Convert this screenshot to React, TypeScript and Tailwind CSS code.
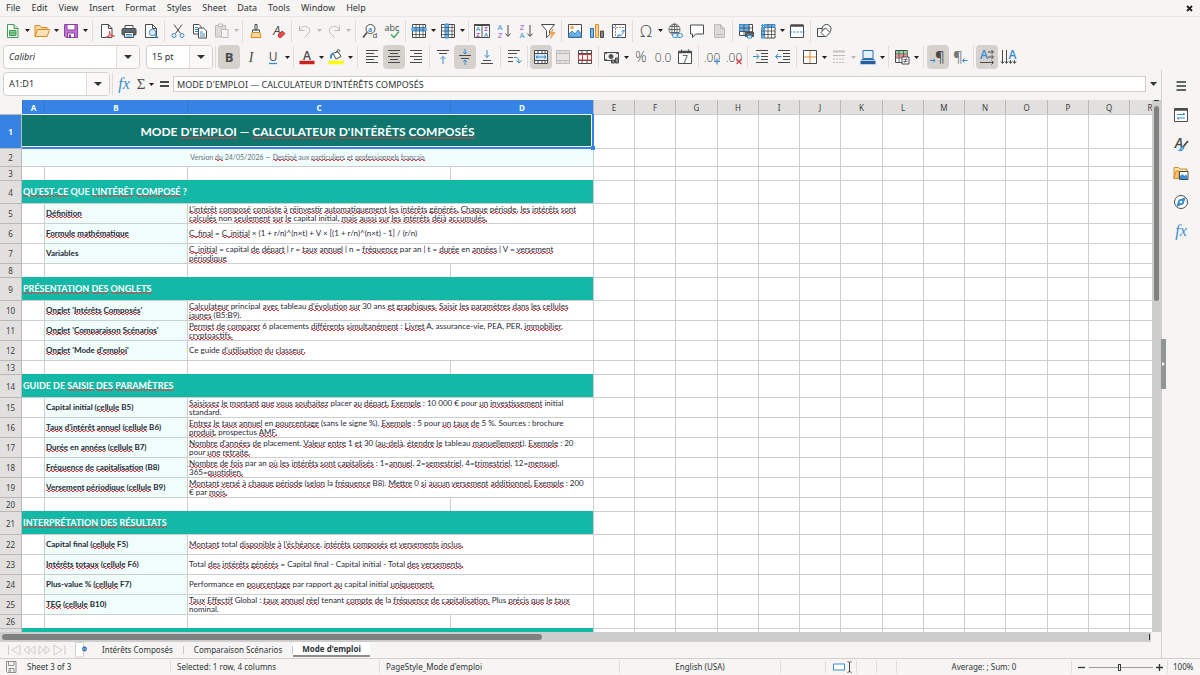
import type { ReactNode } from "react";
import { clsx } from "clsx";

const INK = "#4a4a4a";
const BLUE = "#3a8dcf";
const PALE = "#bdbbb9";

const menus = ["File", "Edit", "View", "Insert", "Format", "Styles", "Sheet", "Data", "Tools", "Window", "Help"];

type Row =
  | { kind: "title" | "note" | "section"; text: string }
  | { kind: "blank" }
  | { kind: "item"; label: string; lines: string[] };

// Words between braces are flagged by the spell checker
const rows: Row[] = [
  { kind: "title", text: "MODE {D'EMPLOI} — {CALCULATEUR} {D'INTÉRÊTS} {COMPOSÉS}" },
  { kind: "note", text: "Version {du} 24/05/2026 — {Destiné} aux {particuliers} {et} {professionnels} {français}" },
  { kind: "blank" },
  { kind: "section", text: "{QU'EST-CE} QUE {L'INTÉRÊT} {COMPOSÉ} ?" },
  {
    kind: "item",
    label: "{Définition}",
    lines: [
      "{L'intérêt} {composé} {consiste} {à} {réinvestir} {automatiquement} {les} {intérêts} {générés.} {Chaque} {période}, {les} {intérêts} {sont}",
      "{calculés} non {seulement} {sur} {le} capital initial, {mais} {aussi} {sur} {les} {intérêts} {déjà} {accumulés.}",
    ],
  },
  { kind: "item", label: "{Formule} {mathématique}", lines: ["{C_final} = {C_initial} × (1 + r/n)^(n×t) + V × [(1 + r/n)^(n×t) - 1] / (r/n)"] },
  {
    kind: "item",
    label: "Variables",
    lines: [
      "{C_initial} = capital {de} {départ} | r = {taux} {annuel} | n = {fréquence} par an | t = {durée} en {années} | V = {versement}",
      "{périodique}",
    ],
  },
  { kind: "blank" },
  { kind: "section", text: "{PRÉSENTATION} {DES} {ONGLETS}" },
  {
    kind: "item",
    label: "{Onglet} '{Intérêts} {Composés}'",
    lines: [
      "{Calculateur} principal {avec} tableau {d'évolution} {sur} 30 ans {et} {graphiques.} {Saisir} {les} {paramètres} {dans} {les} {cellules}",
      "{jaunes} (B5:B9).",
    ],
  },
  {
    kind: "item",
    label: "{Onglet} '{Comparaison} {Scénarios}'",
    lines: [
      "{Permet} {de} {comparer} 6 placements {différents} {simultanément} : {Livret} A, assurance-vie, PEA, PER, {immobilier},",
      "{cryptoactifs.}",
    ],
  },
  { kind: "item", label: "{Onglet} 'Mode {d'emploi}'", lines: ["Ce guide {d'utilisation} {du} {classeur.}"] },
  { kind: "blank" },
  { kind: "section", text: "GUIDE DE {SAISIE} {DES} {PARAMÈTRES}" },
  {
    kind: "item",
    label: "Capital initial ({cellule} B5)",
    lines: [
      "{Saisissez} {le} {montant} {que} {vous} {souhaitez} placer {au} {départ.} {Exemple} : 10 000 € pour {un} {investissement} initial",
      "standard.",
    ],
  },
  {
    kind: "item",
    label: "{Taux} {d'intérêt} {annuel} ({cellule} B6)",
    lines: [
      "{Entrez} {le} {taux} {annuel} en {pourcentage} (sans le signe %). {Exemple} : 5 pour {un} {taux} {de} 5 %. Sources : brochure",
      "{produit}, prospectus {AMF.}",
    ],
  },
  {
    kind: "item",
    label: "{Durée} en {années} ({cellule} B7)",
    lines: [
      "{Nombre} {d'années} {de} placement. {Valeur} {entre} 1 {et} 30 ({au-delà}, {étendre} {le} tableau {manuellement}). {Exemple} : 20",
      "pour {une} {retraite.}",
    ],
  },
  {
    kind: "item",
    label: "{Fréquence} {de} {capitalisation} (B8)",
    lines: [
      "{Nombre} {de} {fois} par an {où} {les} {intérêts} {sont} {capitalisés} : 1={annuel}, 2={semestriel}, 4={trimestriel}, 12={mensuel},",
      "365={quotidien.}",
    ],
  },
  {
    kind: "item",
    label: "{Versement} {périodique} ({cellule} B9)",
    lines: [
      "{Montant} {versé} {à} {chaque} {période} ({selon} la {fréquence} B8). {Mettre} 0 {si} {aucun} {versement} {additionnel.} {Exemple} : 200",
      "€ par {mois.}",
    ],
  },
  { kind: "blank" },
  { kind: "section", text: "{INTERPRÉTATION} {DES} {RÉSULTATS}" },
  { kind: "item", label: "Capital final ({cellule} F5)", lines: ["{Montant} total {disponible} {à} {l'échéance}, {intérêts} {composés} {et} {versements} {inclus.}"] },
  { kind: "item", label: "{Intérêts} {totaux} ({cellule} F6)", lines: ["Total {des} {intérêts} {générés} = Capital final - Capital initial - Total {des} {versements.}"] },
  { kind: "item", label: "Plus-value % ({cellule} F7)", lines: ["Performance en {pourcentage} par rapport {au} capital initial {uniquement.}"] },
  {
    kind: "item",
    label: "{TEG} ({cellule} B10)",
    lines: [
      "{Taux} {Effectif} Global : {taux} {annuel} {réel} tenant {compte} {de} la {fréquence} {de} {capitalisation.} Plus {précis} {que} {le} {taux}",
      "nominal.",
    ],
  },
  { kind: "blank" },
  { kind: "section", text: "" },
];

const rowHeights = {
  title: "h-[34px]",
  note: "h-[18px]",
  blank: "h-[14px]",
  section: "h-[23px]",
  item: "h-5",
};

const extraColumns = [
  ["E", 41], ["F", 41], ["G", 42], ["H", 41], ["I", 41], ["J", 41], ["K", 42],
  ["L", 41], ["M", 41], ["N", 41], ["O", 42], ["P", 41], ["Q", 41], ["R", 41],
] as const;

// Two offset dashed rows of pixels read as a small red wave under the word
const squiggle =
  "[background-image:linear-gradient(90deg,#e0393f_50%,transparent_50%),linear-gradient(90deg,transparent_50%,#e0393f_50%)] [background-position:0_calc(100%-1px),0_100%] [background-size:4px_1px] bg-repeat-x";

function Spelled({ text }: { text: string }) {
  return (
    <>
      {text.split(/(\{[^}]*\})/).map((part, i) =>
        part.startsWith("{") ? (
          <span key={i} className={squiggle}>
            {part.slice(1, -1)}
          </span>
        ) : (
          part
        ),
      )}
    </>
  );
}

/* ---------- Icons ---------- */

function Svg({ children, size = 16 }: { children: ReactNode; size?: number }) {
  return (
    <svg width={size} height={size} viewBox="0 0 16 16" fill="none" stroke={INK} strokeWidth="1" className="shrink-0 overflow-visible" aria-hidden="true">
      {children}
    </svg>
  );
}

function Glyph({ x, y, size, fill = INK, serif, weight = 400, italic, children }: { x: number; y: number; size: number; fill?: string; serif?: boolean; weight?: number; italic?: boolean; children: string }) {
  return (
    <text
      x={x}
      y={y}
      fontSize={size}
      fill={fill}
      stroke="none"
      textAnchor="middle"
      fontWeight={weight}
      fontStyle={italic ? "italic" : "normal"}
      fontFamily={serif ? "Liberation Serif, serif" : "Open Sans, sans-serif"}
    >
      {children}
    </text>
  );
}

const icons = {
  newDoc: (
    <Svg>
      <path d="M2.5 1.5h6.500l4 4v9h-10.500z" stroke="#3f9b52" fill="#fff" />
      <path d="M9 1.500v4h4" stroke="#3f9b52" fill="#cdebd2" />
      <path d="M4.500 7.500h6.500v5h-6.500zM4.500 10h6.500" stroke="#3f9b52" fill="#8bcf98" />
    </Svg>
  ),
  open: (
    <Svg>
      <path d="M1 13.500v-11h5l1.500 2h5.500v2.500" stroke="#d98b2b" fill="#f8d79a" />
      <path d="M1 13.500l2.500-7h12l-2.300 7z" stroke="#d98b2b" fill="#fbe2b0" />
    </Svg>
  ),
  save: (
    <Svg>
      <path d="M1.500 1.500h13v13h-11.500l-1.500-1.500z" stroke="#8e3fa8" fill="#c074d4" />
      <path d="M4 1.500h8v5.500h-8z" stroke="#8e3fa8" fill="#fff" />
      <path d="M4.500 10h7v4.500h-7z" stroke="#8e3fa8" fill="#fff" />
      <path d="M6 11.500h2v3h-2z" fill="#8e3fa8" stroke="none" />
    </Svg>
  ),
  pdf: (
    <Svg>
      <path d="M2.500 1.500h7l3.500 4v9h-10.500z" fill="#fff" />
      <path d="M9.500 1.500v4h3.500" />
      <path d="M7 14.500c3-1 4-4 3.500-6.500 0 3 2 5 5 5-3-.8-6-.3-8.500 1.500z" stroke="#e0434b" />
    </Svg>
  ),
  print: (
    <Svg>
      <path d="M4 2.500h8v3h-8z" fill="#fff" />
      <rect x="1" y="5.500" width="14" height="6.500" rx="1" fill="#5c6770" />
      <path d="M3.500 9.500h9v5h-9z" fill="#fff" />
      <path d="M5 11.500h6M5 13h6" stroke={BLUE} />
    </Svg>
  ),
  preview: (
    <Svg>
      <path d="M2.500 1.500h7l4 4v9h-11z" fill="#fff" />
      <path d="M9.500 1.500v4h4" />
      <circle cx="9.500" cy="9.500" r="3.200" stroke={BLUE} fill="#dceefb" />
      <path d="M12 12l3 3" stroke={BLUE} strokeWidth="1.500" />
    </Svg>
  ),
  cut: (
    <Svg>
      <path d="M4 1.500l6.500 9M12 1.500l-6.500 9" />
      <circle cx="4" cy="12.500" r="2" stroke={BLUE} />
      <circle cx="12" cy="12.500" r="2" stroke={BLUE} />
    </Svg>
  ),
  copy: (
    <Svg>
      <path d="M1.500 1.500h5.500l2 2v7.500h-7.500z" fill="#fff" />
      <path d="M3 4.500h3M3 6.500h3M3 8.500h3" stroke={BLUE} />
      <path d="M6.500 5h5l3 3v7h-8z" fill="#fff" />
      <path d="M8 9h3M8 11h5M8 13h5" stroke={BLUE} />
    </Svg>
  ),
  paste: (
    <Svg>
      <path d="M1.500 2.500h10v11.500h-10z" stroke={PALE} fill="#dcdbd9" />
      <path d="M4.500 1h4v2.500h-4z" stroke={PALE} fill="#f6f5f4" />
      <path d="M7.500 6.500h6.500v8h-6.500z" stroke={PALE} fill="#f6f5f4" />
    </Svg>
  ),
  clone: (
    <Svg>
      <path d="M7 1.500h2v5.500h-2z" />
      <path d="M4.500 7h7v2.500h-7z" />
      <path d="M4 9.500h8l1 5h-10z" stroke="#d98b2b" fill="#fad8a0" />
    </Svg>
  ),
  clear: (
    <Svg>
      <Glyph x={7} y={12} size={13} italic>A</Glyph>
      <path d="M8 12l4-4 3 2.500-4 4h-2z" fill="#e5484d" stroke="#c8343a" />
    </Svg>
  ),
  undo: (
    <Svg>
      <path d="M2.500 2.500v5h5M2.500 7.500c2-4 5-5 8-3.500 3 2 2.500 5 .5 7l-3.500 3.500" stroke={PALE} />
    </Svg>
  ),
  redo: (
    <Svg>
      <path d="M13.500 2.500v5h-5M13.500 7.500c-2-4-5-5-8-3.500-3 2-2.500 5-.5 7l3.500 3.500" stroke={PALE} />
    </Svg>
  ),
  find: (
    <Svg>
      <circle cx="8.500" cy="6" r="4.500" fill="#fff" />
      <path d="M5 9.500l-4 5" strokeWidth="1.600" />
      <Glyph x={8} y={8.500} size={7} fill={BLUE} weight={700}>a</Glyph>
      <Glyph x={13} y={15} size={8}>d</Glyph>
    </Svg>
  ),
  spell: (
    <Svg>
      <Glyph x={8} y={7.500} size={9}>abc</Glyph>
      <path d="M7 11.500l3 3 5-6" stroke="#3fa65a" strokeWidth="1.400" />
    </Svg>
  ),
  rowSel: (
    <Svg>
      <path d="M1.500 1.500h13v13h-13z" fill="#fff" />
      <path d="M1 4.500h14v3.500h-14z" fill="#6cb2e8" stroke={BLUE} />
      <path d="M5 1.500v13M8.500 1.500v13M12 1.500v13M1.500 11.500h13" strokeWidth=".8" />
    </Svg>
  ),
  colSel: (
    <Svg>
      <path d="M1.500 1.500h13v13h-13z" fill="#fff" />
      <path d="M5 1v14h3.500v-14z" fill="#6cb2e8" stroke={BLUE} />
      <path d="M12 1.500v13M1.500 4.500h13M1.500 8h13M1.500 11.500h13" strokeWidth=".8" />
    </Svg>
  ),
  sort: (
    <Svg>
      <path d="M.5 1.500h15v13h-15z" fill="#fff" />
      <path d="M.5 2h15" strokeWidth="2" />
      <path d="M8 2v12.500" />
      <Glyph x={4} y={8} size={6} fill={BLUE} weight={700}>A</Glyph>
      <Glyph x={4} y={14} size={6} fill="#a04fc0" weight={700}>Z</Glyph>
      <Glyph x={12} y={8} size={6} fill="#a04fc0" weight={700}>Z</Glyph>
      <Glyph x={12} y={14} size={6} fill={BLUE} weight={700}>A</Glyph>
    </Svg>
  ),
  asc: (
    <Svg>
      <Glyph x={4} y={7} size={8} fill={BLUE}>A</Glyph>
      <Glyph x={4} y={15} size={8} fill="#a04fc0">Z</Glyph>
      <path d="M12 2v11M9.500 10.500l2.500 3 2.500-3" />
    </Svg>
  ),
  desc: (
    <Svg>
      <Glyph x={4} y={7} size={8} fill="#a04fc0">Z</Glyph>
      <Glyph x={4} y={15} size={8} fill={BLUE}>A</Glyph>
      <path d="M12 2v11M9.500 10.500l2.500 3 2.500-3" />
    </Svg>
  ),
  filter: (
    <Svg>
      <path d="M1.500 1.500h13l-5 6v4.500l-3 2.500v-7z" fill="#fff" />
      <path d="M13 6l-4 5h3l-1.500 4.500 4.500-6h-3z" fill="#f6b35f" stroke="#e08a2a" strokeWidth=".6" />
    </Svg>
  ),
  image: (
    <Svg>
      <path d="M1.500 1.500h13v13h-13z" fill="#fff" />
      <path d="M2 14v-3l3-3 3 3 3-4 3 3.500v3.500z" fill="#6cb2e8" stroke={BLUE} />
      <circle cx="5" cy="4.500" r="1.500" fill="#f8b860" stroke="#e08a2a" strokeWidth=".6" />
    </Svg>
  ),
  chart: (
    <Svg>
      <path d="M1.500 5.500h3v9h-3z" fill="#7abcf0" stroke="#2a6fb0" />
      <path d="M6.500 1.500h3v13h-3z" fill="#fbd28e" stroke="#e08a2a" />
      <path d="M11.500 8h3v6.500h-3z" fill="#888" />
    </Svg>
  ),
  pivot: (
    <Svg>
      <path d="M1.500 1.500h13v13h-13z" fill="#fff" />
      <path d="M2 4.500h12.500M4.500 2v12.500" stroke="#8a8a8a" strokeDasharray="2 1" />
      <path d="M6.500 13c4 0 6-2 6-6M12.500 7l-2 2M12.500 7l2 2M6.500 13l2-2M6.500 13l2 2" stroke={BLUE} />
    </Svg>
  ),
  omega: <Svg><Glyph x={8} y={13.500} size={16} weight={300}>Ω</Glyph></Svg>,
  link: (
    <Svg>
      <g strokeWidth=".8">
        <circle cx="7.500" cy="6.500" r="5.500" fill="#fff" />
        <path d="M2 6.500h11M7.500 1v11M3 3.500h9M3 9.500h9" />
        <ellipse cx="7.500" cy="6.500" rx="2.700" ry="5.500" />
      </g>
      <rect x="5.500" y="10.500" width="5.500" height="4" rx="2" stroke={BLUE} fill="#f6f5f4" />
      <rect x="10" y="10.500" width="5.500" height="4" rx="2" stroke={BLUE} />
    </Svg>
  ),
  comment: <Svg><path d="M1.500 2h13v9h-8l-3 3.500v-3.500h-2z" fill="#fff" /></Svg>,
  header: (
    <Svg>
      <path d="M3.500 1.500h6l4 4v9h-10z" stroke={PALE} fill="#dcdbd9" />
      <path d="M9.500 1.500v4h4M5 11.500h7" stroke={PALE} />
    </Svg>
  ),
  printArea: (
    <Svg>
      <path d="M1.500 1.500h13v11h-13z" fill="#fff" />
      <path d="M1.500 1.500h9.500v7h-9.500z" fill="#6cb2e8" stroke={BLUE} />
      <path d="M6 1.500v11M11 1.500v11M1.500 5h13M1.500 8.500h13" strokeWidth=".8" />
      <path d="M7.500 9.500h8v4h-8z" fill="#5c6770" />
      <path d="M9.500 12.500h4v2.500h-4z" fill="#fff" stroke={BLUE} />
    </Svg>
  ),
  freeze: (
    <Svg>
      <path d="M4.500 4.500h10.500v10.500h-10.500z" fill="#fff" />
      <path d="M1.500 4.500h3v10.500h-3zM4.500 1.500h10.500v3h-10.500z" fill="#6cb2e8" stroke={BLUE} />
      <path d="M8 1.500v13.500M11.500 1.500v13.500M1.500 8h13.500M1.500 11.500h13.500" strokeWidth=".8" />
      <path d="M1 2.500h3M2.500 1v3" stroke={BLUE} />
    </Svg>
  ),
  split: (
    <Svg>
      <path d="M1.500 2.500h13v12h-13z" fill="#fff" />
      <path d="M1.500 2.500h13" strokeWidth="2.500" />
      <path d="M.5 9h15" stroke={BLUE} strokeDasharray="2.500 1" />
    </Svg>
  ),
  shapes: (
    <Svg>
      <path d="M1.500 5.500h8v8h-8z" />
      <circle cx="10.500" cy="6" r="4.500" fill="#f6f5f4" fillOpacity=".7" />
      <path d="M9.500 5l4.500 4.500-4.500 4.500-4.500-4.500z" fill="#fff" />
    </Svg>
  ),
  bold: <Svg><Glyph x={8} y={13} size={13} weight={700}>B</Glyph></Svg>,
  italic: <Svg><Glyph x={8} y={13} size={14} italic serif>I</Glyph></Svg>,
  underline: (
    <Svg>
      <Glyph x={8} y={11.500} size={12}>U</Glyph>
      <path d="M4 14.500h8" stroke={BLUE} strokeWidth="1.300" />
    </Svg>
  ),
  fontColor: (
    <Svg>
      <Glyph x={8} y={10.500} size={12} weight={600}>A</Glyph>
      <path d="M.5 13.500h15" stroke="#c9211e" strokeWidth="3.500" />
    </Svg>
  ),
  fillColor: (
    <Svg>
      <path d="M5 4.500l5-2 3 5-5 2.500z" fill="#fff" />
      <path d="M9 4v-2.500c1-1.500 3-1 3 1" />
      <path d="M3 9.500c-.5-3 .5-5 3-5" stroke={BLUE} strokeWidth="2" />
      <path d="M.5 13.500h15" stroke="#ffff00" strokeWidth="3.500" />
    </Svg>
  ),
  left: <Svg><path d="M2 1.500h12M2 4.500h8M2 7.500h12M2 10.500h8M2 13.500h12" /></Svg>,
  center: <Svg><path d="M2 1.500h12M4 4.500h8M2 7.500h12M4 10.500h8M2 13.500h12" /></Svg>,
  right: <Svg><path d="M2 1.500h12M6 4.500h8M2 7.500h12M6 10.500h8M2 13.500h12" /></Svg>,
  top: (
    <Svg>
      <path d="M2 1.500h12M4 4.500h8" />
      <path d="M8 15v-7.500M5.500 10l2.500-2.500 2.500 2.500" stroke={BLUE} />
    </Svg>
  ),
  middle: (
    <Svg>
      <path d="M2 6.500h12M4 9.500h8" />
      <path d="M8 0v4.500M6 3l2 2 2-2M8 16v-4.500M6 13l2-2 2 2" stroke={BLUE} />
    </Svg>
  ),
  bottom: (
    <Svg>
      <path d="M4 11.500h8M2 14.500h12" />
      <path d="M8 1v7.500M5.500 6l2.500 2.500 2.500-2.500" stroke={BLUE} />
    </Svg>
  ),
  wrap: (
    <Svg>
      <path d="M2 1.500h12M2 4.500h9M2 8.500h5M2 12.500h5" />
      <path d="M8 8.500c3-.5 5 .5 5 5M10.500 11.500l2.500 2.500 2.500-2.500" stroke={BLUE} />
    </Svg>
  ),
  merge: (
    <Svg>
      <path d="M1.500 1.500h13v13h-13z" fill="#fff" />
      <path d="M1.500 4.500h13M1.500 11.500h13M5 1.500v3M9 1.500v3M12 1.500v3M5 11.500v3M9 11.500v3M12 11.500v3" />
      <path d="M2 5h12v6h-12z" fill="#d4eafa" stroke="none" />
      <path d="M3 8h10M5 6.500l-2 1.500 2 1.500M11 6.500l2 1.500-2 1.500" stroke={BLUE} />
    </Svg>
  ),
  mergeOff: (
    <Svg>
      <path d="M1.500 1.500h13v13h-13z" stroke={PALE} fill="#e6e5e3" />
      <path d="M1.500 4.500h13M1.500 11.500h13M5 1.500v3M10 1.500v3M5 11.500v3M10 11.500v3" stroke={PALE} />
    </Svg>
  ),
  unmerge: (
    <Svg>
      <path d="M1.500 1.500h13v13h-13z" fill="#fff" />
      <path d="M1.500 4.500h13M1.500 11.500h13M5 1.500v3M10 1.500v3M5 11.500v3M10 11.500v3" />
      <path d="M1.500 5.500h13v5.500h-13zM5.500 5.500v5.500M10.500 5.500v5.500" stroke="#d9363e" />
    </Svg>
  ),
  currency: (
    <Svg>
      <path d="M.5 3.500h14v8h-14z" fill="#f0f0f0" />
      <circle cx="7" cy="7.500" r="2" fill="#555" />
      <path d="M7.500 14h3v-3h-3zM11.500 14h3v-5h-3z" fill="#888" />
      <path d="M1 4h2M12 4h2M1 11h2" strokeWidth="1.600" />
    </Svg>
  ),
  percent: <Svg><Glyph x={8} y={13} size={14} weight={300}>%</Glyph></Svg>,
  number: <Svg><Glyph x={8} y={12.500} size={12} weight={300}>0.0</Glyph></Svg>,
  date: (
    <Svg>
      <path d="M1.500 2.500h13v12h-13z" fill="#fff" />
      <path d="M1.500 3h13" strokeWidth="2.500" />
      <path d="M4.500 .5v2M11.500 .5v2" />
      <Glyph x={8} y={13.500} size={10}>7</Glyph>
    </Svg>
  ),
  decAdd: (
    <Svg>
      <Glyph x={8} y={12.500} size={12} weight={300}>.00</Glyph>
      <path d="M10 12.500h6M13 9.500v6" stroke={BLUE} strokeWidth="1.200" />
    </Svg>
  ),
  decDel: (
    <Svg>
      <Glyph x={8} y={12.500} size={12} weight={300}>.00</Glyph>
      <path d="M10.500 10l5 5M15.500 10l-5 5" stroke="#e0434b" strokeWidth="1.200" />
    </Svg>
  ),
  indent: (
    <Svg>
      <path d="M3 1.500h12M8 4.500h7M8 7.500h7M8 10.500h7M3 13.500h12" />
      <path d="M0 7.500h6M3.500 5l2.500 2.500-2.500 2.500" stroke={BLUE} />
    </Svg>
  ),
  outdent: (
    <Svg>
      <path d="M3 1.500h12M8 4.500h7M8 7.500h7M8 10.500h7M3 13.500h12" />
      <path d="M6.500 7.500h-6M3 5l-2.500 2.500 2.500 2.500" stroke={BLUE} />
    </Svg>
  ),
  borders: (
    <Svg>
      <path d="M1.500 1.500h13v13h-13z" fill="#fff" />
      <path d="M8 2v12M2 8h12" stroke="#d98b2b" />
    </Svg>
  ),
  borderStyle: (
    <Svg>
      <path d="M2 2h12M2 3h12" stroke={PALE} />
      <path d="M2 6.500h12" stroke={PALE} />
      <path d="M2 10h12M2 13.500h12" stroke={PALE} strokeDasharray="2 1" />
    </Svg>
  ),
  borderColor: (
    <Svg>
      <path d="M3 1.500h10v8h-10z" fill="#e4f1fb" stroke="#2a6fb0" />
      <path d="M1.500 10.500h13" stroke="#2a6fb0" />
      <path d="M.5 13.500h15" stroke="#245f9e" strokeWidth="3.500" />
    </Svg>
  ),
  conditional: (
    <Svg>
      <path d="M1.500 1.500h12v12h-12z" fill="#fff" />
      <path d="M2 2h11.500v3h-11.500z" fill="#8fd69d" stroke="none" />
      <path d="M2 5.500h11.500v3h-11.500z" fill="#f58a8e" stroke="none" />
      <path d="M1.500 5h12M1.500 9h12M5 1.500v12M9.500 1.500v12" strokeWidth=".8" />
      <path d="M8 8h7v7h-7z" fill="#fff" />
      <path d="M9.500 10.500h4M9.500 12.500h4M12.500 9.500l-2 4" strokeWidth=".8" />
    </Svg>
  ),
  ltr: (
    <Svg>
      <Glyph x={10} y={12.500} size={15}>¶</Glyph>
      <path d="M0 11.500h5M3 9.500l2 2-2 2" stroke={BLUE} />
    </Svg>
  ),
  rtl: (
    <Svg>
      <Glyph x={6} y={12.500} size={15} fill="#777">¶</Glyph>
      <path d="M15.500 11.500h-5M12.500 9.500l-2 2 2 2" stroke={BLUE} />
    </Svg>
  ),
  textLtr: (
    <Svg>
      <Glyph x={5} y={10} size={12} fill={BLUE} weight={600}>A</Glyph>
      <path d="M9 3h5M9 8h5M1 13.500h13M12.500 1l2 2-2 2M12.500 6l2 2-2 2M12.500 11.500l2 2-2 2" />
    </Svg>
  ),
  textTtb: (
    <Svg>
      <path d="M1.500 1v13M5.500 1v13M9.500 11v3M13.500 11v3M0 12.500l1.500 2 1.500-2M4 12.500l1.500 2 1.500-2M8 12.500l1.500 2 1.500-2M12 12.500l1.500 2 1.500-2" />
      <Glyph x={11.500} y={10} size={12} fill={BLUE} weight={600}>A</Glyph>
    </Svg>
  ),
  fx: <Svg><Glyph x={8} y={12.500} size={16} fill={BLUE} italic serif>fx</Glyph></Svg>,
  sum: <Svg><Glyph x={8} y={12.500} size={15} serif>Σ</Glyph></Svg>,
  equals: <Svg><path d="M4 6h9M4 10h9" strokeWidth="1.800" /></Svg>,
  hamburger: <Svg><path d="M3.500 4h9.500M3.500 8h9.500M3.500 12h9.500" stroke="#2e3436" strokeWidth="1.500" /></Svg>,
  properties: (
    <Svg>
      <path d="M1.500 1.500h13v13h-13z" fill="#fff" />
      <path d="M1.500 2.500h13" strokeWidth="2.500" />
      <path d="M4 7.500h8M10 6l2 1.500M4 11h8M6 12.500l-2-1.500" stroke={BLUE} />
    </Svg>
  ),
  styles: (
    <Svg>
      <Glyph x={6} y={11.500} size={14} weight={600} italic>A</Glyph>
      <path d="M15 5l-5 6" strokeWidth="1.800" />
      <path d="M5.500 14.500c3 .5 5-.5 5.500-3l-2-1c-1 1-1.500 3-3.500 4z" fill="#6cb2e8" stroke={BLUE} />
    </Svg>
  ),
  gallery: (
    <Svg>
      <path d="M1 13.500v-11h4.500l1.500 1.500h7v3" stroke="#d98b2b" fill="#fbe2b0" />
      <path d="M1 13.500l2-7.500h3v7.500z" stroke="#d98b2b" fill="#f7c477" />
      <path d="M6.500 6.500h8.500v8h-8.500z" fill="#fff" />
      <path d="M7 14v-3l2.500-2 2 2 1.500-1.500 1.500 2v2.500z" fill={BLUE} stroke="none" />
    </Svg>
  ),
  navigator: (
    <Svg>
      <circle cx="8" cy="8" r="6.500" fill="#fff" />
      <path d="M12 4l-2 6-6 2 2-6z" fill={BLUE} stroke={BLUE} />
      <circle cx="8" cy="8" r="1.200" fill="#fff" stroke="none" />
    </Svg>
  ),
};

type IconName = keyof typeof icons;

/* ---------- Toolbar pieces ---------- */

function Caret({ pale }: { pale?: boolean }) {
  return (
    <svg width="5" height="3" viewBox="0 0 5 3" className="shrink-0" aria-hidden="true">
      <path d="M0 0h5L2.500 3z" fill={pale ? PALE : "#1f1f1f"} />
    </svg>
  );
}

function ToolButton({ icon, label, active, menu, disabled }: { icon: IconName; label: string; active?: boolean; menu?: boolean; disabled?: boolean }) {
  return (
    <div className="flex shrink-0 items-center">
      <button
        type="button"
        aria-label={label}
        disabled={disabled}
        className={clsx("flex h-6 w-[22px] items-center justify-center rounded", active && "bg-[#d5d1cd]")}
      >
        {icons[icon]}
      </button>
      {menu && (
        <button type="button" aria-label={`${label} options`} className="flex h-6 w-[7px] items-center justify-center">
          <Caret pale={disabled} />
        </button>
      )}
    </div>
  );
}

function Sep({ wide }: { wide?: boolean }) {
  return (
    <div className={clsx("flex h-[22px] shrink-0 justify-center", wide ? "w-[7px]" : "w-[5px]")}>
      <div className="w-px bg-[#dfddda]" />
    </div>
  );
}

type Tool = [IconName, string, ("menu" | "active" | "disabled" | "disabledMenu")?] | "sep" | "wide";

const standardTools: Tool[] = [
  ["newDoc", "New", "menu"], ["open", "Open", "menu"], ["save", "Save", "menu"], "wide",
  ["pdf", "Export as PDF"], ["print", "Print"], ["preview", "Print Preview"], "sep",
  ["cut", "Cut"], ["copy", "Copy"], ["paste", "Paste", "disabledMenu"], "sep",
  ["clone", "Clone Formatting"], ["clear", "Clear Formatting"], "sep",
  ["undo", "Undo", "disabledMenu"], ["redo", "Redo", "disabledMenu"], "wide",
  ["find", "Find and Replace"], ["spell", "Spelling"], "sep",
  ["rowSel", "Row", "menu"], ["colSel", "Column", "menu"], "sep",
  ["sort", "Sort"], ["asc", "Sort Ascending"], ["desc", "Sort Descending"], ["filter", "AutoFilter"], "sep",
  ["image", "Insert Image"], ["chart", "Insert Chart"], ["pivot", "Insert Pivot Table"], "sep",
  ["omega", "Special Character", "menu"], ["link", "Insert Hyperlink"], ["comment", "Insert Comment"], ["header", "Headers and Footers", "disabled"], "sep",
  ["printArea", "Define Print Area"], ["freeze", "Freeze Panes", "menu"], ["split", "Split Window"], "sep",
  ["shapes", "Show Draw Functions"],
];

const formatTools: Tool[] = [
  ["bold", "Bold", "active"], ["italic", "Italic"], ["underline", "Underline", "menu"], "sep",
  ["fontColor", "Font Color", "menu"], ["fillColor", "Background Color", "menu"], "wide",
  ["left", "Align Left"], ["center", "Center Horizontally", "active"], ["right", "Align Right"], "sep",
  ["top", "Align Top"], ["middle", "Center Vertically", "active"], ["bottom", "Align Bottom"], "sep",
  ["wrap", "Wrap Text"], "sep",
  ["merge", "Merge and Center", "active"], ["mergeOff", "Merge Cells", "disabled"], ["unmerge", "Unmerge Cells"], "sep",
  ["currency", "Format as Currency", "menu"], ["percent", "Format as Percent"], ["number", "Format as Number"], ["date", "Format as Date"], "sep",
  ["decAdd", "Add Decimal Place"], ["decDel", "Delete Decimal Place"], "sep",
  ["indent", "Increase Indent"], ["outdent", "Decrease Indent"], "sep",
  ["borders", "Borders", "menu"], ["borderStyle", "Border Style", "disabledMenu"], ["borderColor", "Border Color", "menu"], "sep",
  ["conditional", "Conditional", "menu"], "wide",
  ["ltr", "Left-To-Right", "active"], ["rtl", "Right-To-Left"], "sep",
  ["textLtr", "Text direction from left to right", "active"], ["textTtb", "Text direction from top to bottom"],
];

function Tools({ tools }: { tools: Tool[] }) {
  return (
    <>
      {tools.map((tool, i) => {
        if (typeof tool === "string") return <Sep key={i} wide={tool === "wide"} />;
        const [icon, label, mode] = tool;
        return (
          <ToolButton
            key={i}
            icon={icon}
            label={label}
            active={mode === "active"}
            menu={mode === "menu" || mode === "disabledMenu"}
            disabled={mode === "disabled" || mode === "disabledMenu"}
          />
        );
      })}
    </>
  );
}

function Combo({ label, value, className, italic }: { label: string; value: string; className: string; italic?: boolean }) {
  return (
    <div className={clsx("flex h-6 shrink-0 overflow-hidden rounded border border-[#d3d0cc] bg-white", className)}>
      <input
        aria-label={label}
        defaultValue={value}
        className={clsx("w-0 min-w-0 flex-1 bg-transparent pl-[5px] text-[9px] outline-none", italic && "italic")}
      />
      <button type="button" aria-label={`${label} list`} className="flex w-[23px] items-center justify-center border-l border-[#dedbd8] bg-[#faf9f8]">
        <svg width="8" height="4" viewBox="0 0 8 4" aria-hidden="true">
          <path d="M0 0h8L4 4z" fill="#2e3436" />
        </svg>
      </button>
    </div>
  );
}

/* ---------- Sheet ---------- */

const line = "border-[#cccfd0]";

function SheetRow({ row, index }: { row: Row; index: number }) {
  const selected = index === 0;
  return (
    <tr className={rowHeights[row.kind]}>
      <th
        scope="row"
        className={clsx(
          "border-t border-r border-[#b9b8b6] text-center text-[8px] leading-[9px]",
          selected ? "bg-[#3584e4] font-bold text-white" : "bg-[#e1e0de] font-normal text-[#3c3c3c]",
        )}
      >
        {index + 1}
      </th>
      {row.kind === "title" && (
        <td colSpan={4} className="relative bg-[#0f766e] text-center font-[Lato,sans-serif] text-xs leading-[15px] font-bold text-white">
          <Spelled text={row.text} />
          <div className="absolute top-0 -right-px -bottom-px left-0 border-r-2 border-b-2 border-[#3584e4]">
            <div className="h-full border-t border-r border-b border-white" />
          </div>
          <div className="absolute -right-0.5 -bottom-0.5 size-1 bg-[#3584e4]" />
        </td>
      )}
      {row.kind === "note" && (
        <td colSpan={4} className="bg-[#f0fdfa] text-center font-[Lato,sans-serif] text-[7px] leading-[9px] text-[#6b7280]">
          <Spelled text={row.text} />
        </td>
      )}
      {row.kind === "section" && (
        <td colSpan={4} className="bg-[#14b8a6] pl-px font-[Lato,sans-serif] text-[9px] leading-[11px] font-bold text-white">
          <Spelled text={row.text} />
        </td>
      )}
      {row.kind === "blank" && (
        <>
          <td className={clsx("border-t", line)} />
          <td className={clsx("border-t border-l", line)} />
          <td className={clsx("border-t border-l", line)} />
          <td className={clsx("border-t border-l", line)} />
        </>
      )}
      {row.kind === "item" && (
        <>
          <td className={clsx("border-t", line)} />
          <td className={clsx("border-t border-l bg-[#f0fdfa] pl-px font-[Lato,sans-serif] text-[8px] leading-[9px] font-bold text-[#1f2937]", line)}>
            <Spelled text={row.label} />
          </td>
          <td colSpan={2} className={clsx("border-t border-l pl-px font-[Lato,sans-serif] text-[8px] leading-[9px] whitespace-nowrap text-[#1f2937]", line)}>
            {row.lines.map((text) => (
              <div key={text}>
                <Spelled text={text} />
              </div>
            ))}
          </td>
        </>
      )}
      {extraColumns.map(([name]) => (
        <td key={name} className={clsx("border-t border-l", line)} />
      ))}
    </tr>
  );
}

function Sheet() {
  const head = "border-l border-[#b9b8b6] bg-[#e1e0de] text-center text-[8px] leading-[9px] font-normal text-[#3c3c3c]";
  const headSelected = "border-l border-[#2f77cf] bg-[#3584e4] text-center text-[8px] leading-[9px] font-bold text-white";
  return (
    <table className="w-[1170px] table-fixed border-separate border-spacing-0 [&_td]:py-0 [&_th]:p-0">
      <colgroup>
        <col className="w-[22px]" />
        <col className="w-[22px]" />
        <col className="w-[143px]" />
        <col className="w-[263px]" />
        <col className="w-[143px]" />
        {extraColumns.map(([name, width]) => (
          <col key={name} style={{ width }} />
        ))}
      </colgroup>
      <thead>
        <tr className="h-[14px]">
          <td className="bg-[#f6f5f4]" />
          {["A", "B", "C", "D"].map((name) => (
            <th key={name} scope="col" className={headSelected}>
              {name}
            </th>
          ))}
          {extraColumns.map(([name]) => (
            <th key={name} scope="col" className={head}>
              {name}
            </th>
          ))}
        </tr>
      </thead>
      <tbody>
        {rows.map((row, i) => (
          <SheetRow key={i} row={row} index={i} />
        ))}
      </tbody>
    </table>
  );
}

function SheetTabs() {
  const tab = "flex h-[15px] items-center text-[8px]";
  return (
    <div className="flex h-4 shrink-0 items-start pl-1.5">
      <div className="flex w-[60px] items-center pt-px">
        {[
          ["First sheet", "M1.500 2v10M13 2l-8 5 8 5z"],
          ["Previous sheet", "M7 3l-5 4 5 4zM13 3l-5 4 5 4z"],
          ["Next sheet", "M2 3l5 4-5 4zM8 3l5 4-5 4z"],
          ["Last sheet", "M13 2v10M2 2l8 5-8 5z"],
        ].map(([label, d]) => (
          <button key={label} type="button" aria-label={label} className="flex flex-1 items-center justify-center">
            <svg width="14" height="14" viewBox="0 0 14 14" fill="none" stroke="#cfcdca" aria-hidden="true">
              <path d={d} />
            </svg>
          </button>
        ))}
      </div>
      <button type="button" aria-label="Add sheet" className="flex w-[29px] items-center justify-center">
        <svg width="14" height="16" viewBox="0 0 14 16" aria-hidden="true">
          <path d="M1.500 .5h8v13l-1 1.500h-7z" fill="#fff" stroke="#d3d1ce" />
          <circle cx="10.500" cy="7" r="1.800" fill="#fff" stroke="#2f6fb5" strokeWidth="1.200" />
          <path d="M10.500 4.500v5M8 7h5" stroke="#2f6fb5" strokeWidth=".6" />
        </svg>
      </button>
      <button type="button" className={clsx(tab, "px-[7px]")}>Intérêts Composés</button>
      <div className="mx-[3px] mt-1 h-2 w-px bg-[#c9c7c4]" />
      <button type="button" className={clsx(tab, "px-[7px]")}>Comparaison Scénarios</button>
      <div className="ml-[3px] mt-1 h-2 w-px bg-[#c9c7c4]" />
      <button type="button" className={clsx(tab, "border-b-2 border-[#8b8e8f] bg-white px-[9px] font-bold")}>Mode d'emploi</button>
    </div>
  );
}

function StatusBar() {
  const cell = "my-0.5 flex items-center border-l border-[#dfddda]";
  return (
    <footer className="grid h-[17px] shrink-0 grid-cols-[170px_209fr_240fr_161fr_45fr_31px_20px_20px_175fr_96px_33px] border-t border-[#d3d0cc] text-[8px] leading-3">
      <div className="flex items-center gap-[9px] pl-1">
        <svg width="14" height="12" viewBox="0 0 14 12" fill="none" stroke="#8f8f8f" aria-hidden="true">
          <path d="M2.500 .5h9.500v11h-8.500l-1-1zM4.500 .5v4h5.500v-4M5 11.500v-4h5v4M6.500 8.500v2" />
        </svg>
        <span>Sheet 3 of 3</span>
      </div>
      <div className={clsx(cell, "pl-1.5")}>Selected: 1 row, 4 columns</div>
      <div className={clsx(cell, "pl-1.5")}>PageStyle_Mode d'emploi</div>
      <div className={clsx(cell, "justify-center")}>English (USA)</div>
      <div className={cell} />
      <div className={clsx(cell, "gap-0.5 pl-1.5")}>
        <svg width="20" height="12" viewBox="0 0 20 12" fill="none" aria-hidden="true">
          <path d="M1.500 3h11v6h-11z" stroke={BLUE} fill="#fff" />
          <path d="M17.500 1.500v9.500M15.500 .5l2 1 2-1M15.500 11.500l2-1 2 1" stroke={INK} />
        </svg>
      </div>
      <div className={cell} />
      <div className={cell} />
      <div className={clsx(cell, "justify-center")}>Average: ; Sum: 0</div>
      <div className={clsx(cell, "justify-between pr-1 pl-1.5")}>
        <button type="button" aria-label="Zoom out" className="flex w-[7px] justify-center">
          <svg width="7" height="7" viewBox="0 0 7 7" stroke="#2e3436" strokeWidth="1.300" aria-hidden="true">
            <path d="M0 3.500h7" />
          </svg>
        </button>
        <input
          type="range"
          aria-label="Zoom"
          min={0}
          max={100}
          defaultValue={49}
          className="h-2 w-16 appearance-none bg-transparent [&::-webkit-slider-runnable-track]:h-px [&::-webkit-slider-runnable-track]:bg-[#9a9a98] [&::-webkit-slider-thumb]:-mt-[3px] [&::-webkit-slider-thumb]:h-[7px] [&::-webkit-slider-thumb]:w-[3px] [&::-webkit-slider-thumb]:appearance-none [&::-webkit-slider-thumb]:border [&::-webkit-slider-thumb]:border-[#3c3c3c] [&::-webkit-slider-thumb]:bg-white"
        />
        <button type="button" aria-label="Zoom in" className="flex w-[7px] justify-center">
          <svg width="7" height="7" viewBox="0 0 7 7" stroke="#2e3436" strokeWidth="1.300" aria-hidden="true">
            <path d="M0 3.500h7M3.500 0v7" />
          </svg>
        </button>
      </div>
      <div className={clsx(cell, "pl-[5px]")}>100%</div>
    </footer>
  );
}

const sidebar: [IconName, string][] = [
  ["hamburger", "Sidebar Settings"],
  ["properties", "Properties"],
  ["styles", "Styles"],
  ["gallery", "Gallery"],
  ["navigator", "Navigator"],
  ["fx", "Functions"],
];

export default function App() {
  return (
    <div className="flex h-screen flex-col overflow-hidden bg-[#f6f5f4] font-['Noto_Sans',sans-serif] text-[#2e3436]">
      {/* Menu bar */}
      <nav className="flex h-[17px] shrink-0 items-center gap-[11px] border-b border-[#eae8e6] pr-[7px] pl-1.5 text-[9px] leading-3">
        {menus.map((menu) => (
          <button key={menu} type="button">
            {menu}
          </button>
        ))}
        <button type="button" aria-label="Close document" className="ml-auto">
          <svg width="7" height="7" viewBox="0 0 7 7" stroke="#1f1f1f" strokeWidth="1.800" aria-hidden="true">
            <path d="M1 1l5 5M6 1l-5 5" />
          </svg>
        </button>
      </nav>

      <div className="flex h-[27px] shrink-0 items-center pl-0.5">
        <Tools tools={standardTools} />
      </div>

      <div className="flex h-[26px] shrink-0 items-center pl-[3px]">
        <Combo label="Font Name" value="Calibri" className="w-[137px]" italic />
        <Combo label="Font Size" value="15 pt" className="ml-1.5 w-[67px]" />
        <Sep />
        <Tools tools={formatTools} />
      </div>

      <div className="flex min-h-0 flex-1">
        <main className="flex min-w-0 flex-1 flex-col">
          {/* Formula bar */}
          <div className="flex h-[30px] shrink-0 items-center pb-0.5 pl-[3px]">
            <Combo label="Name Box" value="A1:D1" className="w-[107px]" />
            <Sep />
            <button type="button" aria-label="Function Wizard" className="flex w-[18px] justify-center">{icons.fx}</button>
            <button type="button" aria-label="Select Function" className="flex w-[22px] items-center">
              {icons.sum}
              <Caret />
            </button>
            <button type="button" aria-label="Formula" className="flex w-[18px] justify-center">{icons.equals}</button>
            <input
              aria-label="Input line"
              defaultValue="MODE D'EMPLOI — CALCULATEUR D'INTÉRÊTS COMPOSÉS"
              className="h-4 min-w-0 flex-1 border border-[#d3d0cc] bg-white pl-[3px] text-[9px] outline-none"
            />
            <button type="button" aria-label="Expand Formula Bar" className="flex w-[15px] items-center justify-center">
              <svg width="7" height="4" viewBox="0 0 7 4" aria-hidden="true">
                <path d="M0 0h7L3.500 4z" fill="#2e3436" />
              </svg>
            </button>
          </div>

          <div className="flex min-h-0 flex-1">
            <div className="min-w-0 flex-1 overflow-hidden bg-white">
              <Sheet />
            </div>
            <div className="w-[9px] shrink-0 bg-[#cdcdcd] px-0.5">
              <div className="h-px bg-[#2e3436]" />
              <div className="mt-[5px] h-[195px] rounded-full bg-[#7f8281]" />
            </div>
          </div>
          <div className="mr-[10px] flex h-[10px] shrink-0 items-center bg-[#cdcdcd] pl-0.5">
            <div className="h-1.5 w-[47%] rounded-full bg-[#7f8281]" />
            <div className="mr-px ml-auto h-1.5 w-px bg-[#2e3436]" />
          </div>
          <SheetTabs />
        </main>

        <aside className="relative flex w-[39px] shrink-0 flex-col items-center border-l border-[#d3d0cc] pt-px">
          {sidebar.map(([icon, label]) => (
            <button key={icon} type="button" aria-label={label} className="flex h-[29px] w-6 shrink-0 items-center justify-center">
              {icons[icon]}
            </button>
          ))}
          <button
            type="button"
            aria-label="Hide sidebar"
            className="absolute top-1/2 -left-px flex h-[50px] w-[5px] -translate-y-1/2 items-center justify-center bg-[#929595]"
          >
            <svg width="3" height="4" viewBox="0 0 3 4" aria-hidden="true">
              <path d="M0 0l3 2-3 2z" fill="#fff" />
            </svg>
          </button>
        </aside>
      </div>

      <StatusBar />
    </div>
  );
}
